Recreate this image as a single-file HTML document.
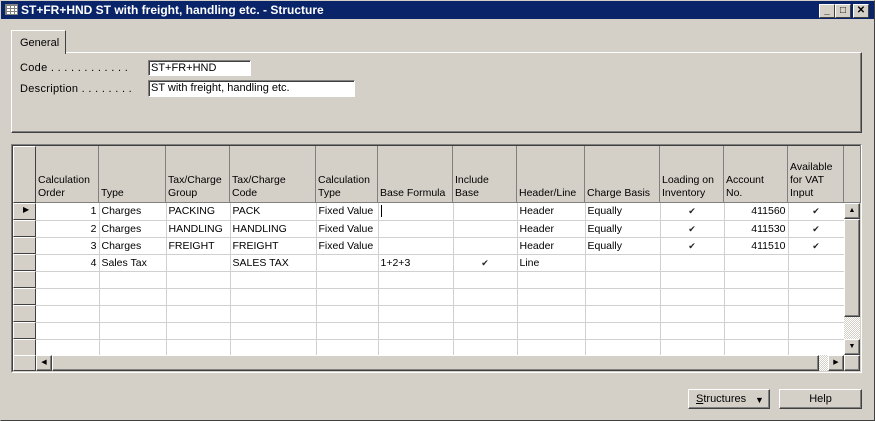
<!DOCTYPE html>
<html><head><style>
*{box-sizing:border-box;margin:0;padding:0}
body{width:875px;height:421px;background:#d4d0c8;font-family:"Liberation Sans",sans-serif;font-size:11px;color:#000;position:relative;overflow:hidden}
.a{position:absolute}
.title{left:0;top:0;width:875px;height:20px;background:#0a246a;border:1px solid #d4d0c8;}
.title span{position:absolute;left:20px;top:2px;color:#fff;font-weight:bold;font-size:12px}
.tb{top:4px;width:16px;height:14px;background:#d4d0c8;border:1px solid;border-color:#fff #404040 #404040 #fff;font-weight:bold;font-size:10px;text-align:center;line-height:12px}
.sunk{background:#fff;border:1px solid;border-color:#808080 #fff #fff #808080;box-shadow:inset 1px 1px 0 #404040}
.raised{border:1px solid;border-color:#fff #404040 #404040 #fff;box-shadow:inset -1px -1px 0 #808080;background:#d4d0c8}
.h{top:146px;height:57px;background:#d4d0c8;border-right:1px solid #808080;border-bottom:1px solid #808080;padding:0 2px;line-height:13px;display:flex;align-items:flex-end;padding-bottom:2px;white-space:nowrap;font-size:10.5px}
.c{height:17px;line-height:16px;border-right:1px solid #d0d0d0;border-bottom:1px solid #d0d0d0;padding:0 2px;white-space:nowrap;background:#fff;overflow:hidden;font-size:10.5px}
.r{text-align:right}.m{text-align:center;font-size:9px;color:#222}
.sel{left:13px;width:23px;height:17px;background:#d4d0c8;border:1px solid;border-color:#fff #404040 #404040 #fff}
</style></head><body>
<div class="a title"><span>ST+FR+HND ST with freight, handling etc. - Structure</span>
<div class="a" style="left:4px;top:3px;width:13px;height:11px;background:#fff;border:1px solid #808080;background-image:linear-gradient(#808080 1px,transparent 1px),linear-gradient(90deg,#808080 1px,transparent 1px);background-size:4px 3px"></div>
</div>
<div class="a tb" style="left:819px">_</div>
<div class="a tb" style="left:835px">□</div>
<div class="a tb" style="left:853px">✕</div>

<div class="a" style="left:11px;top:52px;width:851px;height:81px;border:1px solid;border-color:#fff #404040 #404040 #fff;box-shadow:inset -1px -1px 0 #808080"></div>
<div class="a" style="left:11px;top:30px;width:55px;height:24px;background:#d4d0c8;border:1px solid;border-color:#fff #404040 transparent #fff;border-bottom:none;padding:6px 0 0 8px">General</div>
<div class="a" style="left:20px;top:62px;letter-spacing:0.3px">Code . . . . . . . . . . . .</div>
<div class="a sunk" style="left:148px;top:60px;width:103px;height:16px;padding:1px 2px">ST+FR+HND</div>
<div class="a" style="left:20px;top:83px;letter-spacing:0.3px">Description . . . . . . . .</div>
<div class="a sunk" style="left:148px;top:80px;width:207px;height:17px;padding:1px 2px">ST with freight, handling etc.</div>

<div class="a" style="left:11px;top:144px;width:851px;height:229px;border:1px solid;border-color:#808080 #fff #fff #808080;background:#d4d0c8"><div class="a" style="left:0;top:0;width:849px;height:227px;border:1px solid;border-color:#404040 #d4d0c8 #d4d0c8 #404040"></div></div>
<div class="a" style="left:13px;top:146px;width:23px;height:57px;background:#d4d0c8;border:1px solid;border-color:#fff #404040 #404040 #fff"></div>
<div class="a h" style="left:36px;width:63px">Calculation<br>Order</div>
<div class="a h" style="left:99px;width:67px">Type</div>
<div class="a h" style="left:166px;width:64px">Tax/Charge<br>Group</div>
<div class="a h" style="left:230px;width:86px">Tax/Charge<br>Code</div>
<div class="a h" style="left:316px;width:62px">Calculation<br>Type</div>
<div class="a h" style="left:378px;width:75px">Base Formula</div>
<div class="a h" style="left:453px;width:64px">Include<br>Base</div>
<div class="a h" style="left:517px;width:68px">Header/Line</div>
<div class="a h" style="left:585px;width:75px">Charge Basis</div>
<div class="a h" style="left:660px;width:64px">Loading on<br>Inventory</div>
<div class="a h" style="left:724px;width:64px">Account<br>No.</div>
<div class="a h" style="left:788px;width:56px">Available<br>for VAT<br>Input</div>
<div class="a h" style="left:844px;width:17px;padding:0"></div>

<div class="a" style="left:36px;top:203px;width:808px;overflow:hidden;height:152px">
<table style="border-collapse:collapse;table-layout:fixed;width:808px" cellspacing="0">
<colgroup><col style="width:63px"><col style="width:67px"><col style="width:64px"><col style="width:86px"><col style="width:62px"><col style="width:75px"><col style="width:64px"><col style="width:68px"><col style="width:75px"><col style="width:64px"><col style="width:64px"><col style="width:56px"></colgroup>
<tr><td class="c r">1</td><td class="c">Charges</td><td class="c">PACKING</td><td class="c">PACK</td><td class="c">Fixed Value</td><td class="c"><span style="border-left:1px solid #000"> </span></td><td class="c"></td><td class="c">Header</td><td class="c">Equally</td><td class="c m">✔</td><td class="c r">411560</td><td class="c m">✔</td></tr>
<tr><td class="c r">2</td><td class="c">Charges</td><td class="c">HANDLING</td><td class="c">HANDLING</td><td class="c">Fixed Value</td><td class="c"></td><td class="c"></td><td class="c">Header</td><td class="c">Equally</td><td class="c m">✔</td><td class="c r">411530</td><td class="c m">✔</td></tr>
<tr><td class="c r">3</td><td class="c">Charges</td><td class="c">FREIGHT</td><td class="c">FREIGHT</td><td class="c">Fixed Value</td><td class="c"></td><td class="c"></td><td class="c">Header</td><td class="c">Equally</td><td class="c m">✔</td><td class="c r">411510</td><td class="c m">✔</td></tr>
<tr><td class="c r">4</td><td class="c">Sales Tax</td><td class="c"></td><td class="c">SALES TAX</td><td class="c"></td><td class="c">1+2+3</td><td class="c m">✔</td><td class="c">Line</td><td class="c"></td><td class="c"></td><td class="c"></td><td class="c"></td></tr>
<tr><td class="c"></td><td class="c"></td><td class="c"></td><td class="c"></td><td class="c"></td><td class="c"></td><td class="c"></td><td class="c"></td><td class="c"></td><td class="c"></td><td class="c"></td><td class="c"></td></tr>
<tr><td class="c"></td><td class="c"></td><td class="c"></td><td class="c"></td><td class="c"></td><td class="c"></td><td class="c"></td><td class="c"></td><td class="c"></td><td class="c"></td><td class="c"></td><td class="c"></td></tr>
<tr><td class="c"></td><td class="c"></td><td class="c"></td><td class="c"></td><td class="c"></td><td class="c"></td><td class="c"></td><td class="c"></td><td class="c"></td><td class="c"></td><td class="c"></td><td class="c"></td></tr>
<tr><td class="c"></td><td class="c"></td><td class="c"></td><td class="c"></td><td class="c"></td><td class="c"></td><td class="c"></td><td class="c"></td><td class="c"></td><td class="c"></td><td class="c"></td><td class="c"></td></tr>
<tr><td class="c"></td><td class="c"></td><td class="c"></td><td class="c"></td><td class="c"></td><td class="c"></td><td class="c"></td><td class="c"></td><td class="c"></td><td class="c"></td><td class="c"></td><td class="c"></td></tr>
</table></div>
<div class="a sel" style="top:203px"><span style="position:absolute;left:9px;top:1px;font-size:8px">▶</span></div>
<div class="a sel" style="top:220px"></div>
<div class="a sel" style="top:237px"></div>
<div class="a sel" style="top:254px"></div>
<div class="a sel" style="top:271px"></div>
<div class="a sel" style="top:288px"></div>
<div class="a sel" style="top:305px"></div>
<div class="a sel" style="top:322px"></div>
<div class="a sel" style="top:339px"></div>
<div class="a sel" style="top:355px;height:16px"></div>

<div class="a" style="left:844px;top:203px;width:16px;height:152px;background:repeating-conic-gradient(#fff 0 25%,#d4d0c8 0 50%) 0 0/2px 2px"></div>
<div class="a raised" style="left:844px;top:203px;width:16px;height:16px;font-size:7px;text-align:center;line-height:13px">▲</div>
<div class="a raised" style="left:844px;top:219px;width:16px;height:98px"></div>
<div class="a raised" style="left:844px;top:339px;width:16px;height:16px;font-size:7px;text-align:center;line-height:14px">▼</div>
<div class="a" style="left:36px;top:355px;width:808px;height:16px;background:repeating-conic-gradient(#fff 0 25%,#d4d0c8 0 50%) 0 0/2px 2px"></div>
<div class="a raised" style="left:36px;top:355px;width:16px;height:16px;font-size:7px;text-align:center;line-height:14px">◀</div>
<div class="a raised" style="left:52px;top:355px;width:767px;height:16px"></div>
<div class="a raised" style="left:828px;top:355px;width:16px;height:16px;font-size:7px;text-align:center;line-height:14px">▶</div>
<div class="a raised" style="left:844px;top:355px;width:16px;height:16px"></div>

<div class="a raised" style="left:688px;top:389px;width:82px;height:20px;padding:3px 0 0 7px"><u>S</u>tructures <span style="position:absolute;left:66px;top:5px;font-size:9px">▼</span></div>
<div class="a raised" style="left:779px;top:389px;width:83px;height:20px;text-align:center;padding-top:3px">Help</div>
<div class="a" style="left:0;top:0;width:875px;height:421px;border:1px solid;border-color:#d4d0c8 #404040 #404040 #d4d0c8;pointer-events:none"></div>
</body></html>
